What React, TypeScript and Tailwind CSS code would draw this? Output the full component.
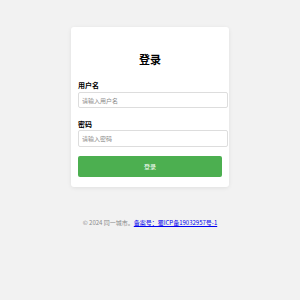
export default function App() {
  return (
    <div
      className="min-h-[300px] w-[300px] bg-[#f2f2f2] pt-[27px]"
      style={{ fontFamily: '"Noto Sans CJK SC", "Liberation Sans", sans-serif' }}
    >
      <div className="mx-auto w-[158px] rounded-[3px] bg-white px-[7px] pb-[10px] pt-[25px] shadow-[0_1px_4px_rgba(0,0,0,0.08)]">
        <h2 className="h-[14px] text-center text-[11px] font-bold leading-[14px] text-black">登录</h2>

        <label className="mt-[15px] block h-[8px] text-[7px] font-bold leading-[8px] text-black">用户名</label>
        <input
          type="text"
          placeholder="请输入用户名"
          className="mt-[3px] block h-[16px] w-[150px] rounded-[2px] border border-[#dddddd] bg-white px-[3px] text-[6px] placeholder:text-[#8a8a8a] outline-none"
        />

        <label className="mt-[12px] block h-[8px] text-[7px] font-bold leading-[8px] text-black">密码</label>
        <input
          type="password"
          placeholder="请输入密码"
          className="mt-[2px] block h-[17px] w-[150px] rounded-[2px] border border-[#dddddd] bg-white px-[3px] text-[6px] placeholder:text-[#8a8a8a] outline-none"
        />

        <button className="mt-[9px] block h-[21px] w-[144px] rounded-[2px] bg-[#4caf50] text-[6px] text-white">
          登录
        </button>
      </div>

      <p className="mt-[31px] h-[10px] text-center text-[6px] leading-[10px] text-[#888888]">
        © 2024 同一城市。
        <a href="#" className="text-[#0000ee] underline">备案号：蜀ICP备19032957号-1</a>
      </p>
    </div>
  );
}
